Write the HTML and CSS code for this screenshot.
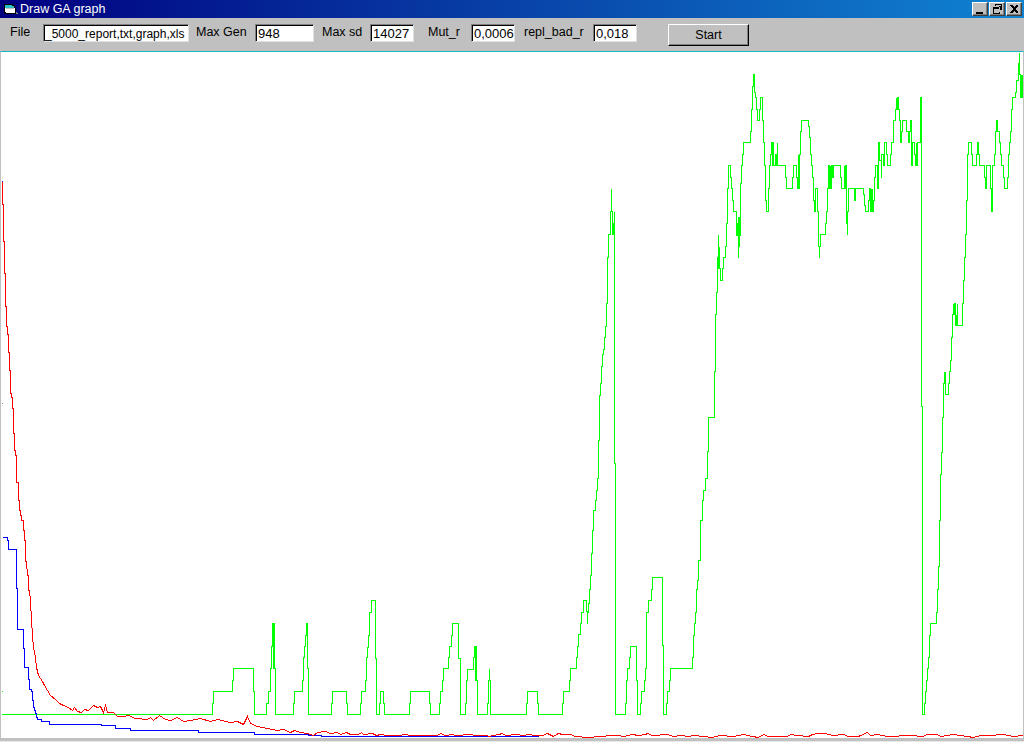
FILE: index.html
```html
<!DOCTYPE html>
<html lang="en">

<head>
    <meta charset="UTF-8">
    <title>Draw GA graph</title>
    <link rel="stylesheet" href="styles.css">
</head>

<body>
    <div class="window">
        <div class="titlebar">
            <svg class="app-icon" width="16" height="16" viewBox="0 0 16 16" shape-rendering="crispEdges">
                <path d="M1 3h9v1h2v3h1v6H2v-1H1z" fill="#000" />
                <path d="M2 4h7v1h2v2H2z" fill="#30c0c8" />
                <path d="M2 7h10v5H3v-1H2z" fill="#fff" />
                <path d="M3 7h8v1H3z" fill="#c0c0c0" />
                <path d="M13 11h1v1h1v1h-2z" fill="#808080" />
            </svg>
            <span class="title-text">Draw GA graph</span>
            <div class="title-buttons">
                <div class="title-btn">
                    <svg width="14" height="12" viewBox="0 0 14 12" shape-rendering="crispEdges"><path d="M3 9h7v2H3z" fill="#000" /></svg>
                </div>
                <div class="title-btn">
                    <svg width="14" height="12" viewBox="0 0 14 12" shape-rendering="crispEdges"><path d="M5 1h7v6h-2V9H9V3H5zM6 2v1h5V2zM3 4h7v7H3zM4 6v4h5V6z" fill="#000" fill-rule="evenodd" /></svg>
                </div>
                <div class="title-btn close-btn">
                    <svg width="14" height="12" viewBox="0 0 14 12" shape-rendering="crispEdges"><path d="M3 2h2l2 2 2-2h2v1L8 6l3 3v1H9L7 8l-2 2H3V9l3-3-3-3z" fill="#000" /></svg>
                </div>
            </div>
        </div>

        <div class="toolbar">
            <label class="lbl lbl-file">File</label>
            <input class="field field-file" type="text" value="_5000_report,txt,graph,xls">
            <label class="lbl lbl-gen">Max Gen</label>
            <input class="field field-gen" type="text" value="948">
            <label class="lbl lbl-sd">Max sd</label>
            <input class="field" type="text" value="14027">
            <label class="lbl lbl-mut">Mut_r</label>
            <input class="field" type="text" value="0,0006">
            <label class="lbl lbl-repl">repl_bad_r</label>
            <input class="field" type="text" value="0,018">
            <button class="start-btn">Start</button>
        </div>

        <div class="graph">
            <svg class="plot" width="1022" height="686" viewBox="1 52 1022 686" shape-rendering="crispEdges" fill="none">
                <g transform="translate(.5 .5)">
                    <path class="tick-green" d="M1 691h1" />
                    <path class="tick-grey" d="M1 403h1" />
                    <!-- green: best fitness -->
                    <path class="line-green" d="M1 714H212V703H213V691H232V680H233V668H253V691H254V714H266V703H268V691H270V668H271V646H272V623H273V668H273V623H274V668H275V714H293V703H294V691H302V680H303V657H304V646H305V635H306V623H307V668H307V623H307V668H308V714H331V703H332V691H346V703H347V714H360V703H361V691H365V680H366V657H367V647H368V635H369V612H371V600H375V658H376V714H379V703H380V691H383V703H384V714H409V703H410V691H429V703H430V714H439V703H440V691H442V680H443V668H448V657H449V646H451V635H452V623H458V658H460V714H465V703H466V680H467V669H473V657H474V646H475V680H475V646H476V680H477V714H487V703H488V680H489V668V680H490V692V714H526V703H527V691H537V703H538V714H562V703H563V691H569V680H570V668H576V657H577V646H578V634H580V623H581V612H583V600H586V611H587V623V612H588V603H589V589H590V575H591V553H592V530H593V510H595V500H596V490H597V478H598V440H599V395H600V383H601V366H602V354H603V349H604V337H605V326H606V303H607V257H608V234H610V211H611V188V211H612V234H613V223H614V211V463H615V714H625V703H626V680H627V668H629V657H630V646H636V680H637V714H640V703H641V691H644V680H645V668H646V612H648V600H651V589H652V577H662V645H663V714H666V703H667V691H669V680H670V668H692V657H693V635H694V623H695V612H696V589H697V580H698V560H700V520H702V500H703V490H705V478H707V451H708V417H714V371H715V314H716V292H717V257H718V234V268H719V246V268H720V280H722V268H723V257H725V246H726V223H727V188H728V165H730V177H731V188H732V200H733V211H736V235V223H737V235H738V257V217H739V246V235H740V183H741V165H742V154H743V142H750V131H751V109H752V86H753V74H754V92H755V97H756V109H757V120H759V109H760V97H762V120H763V142H764V165H765V200H766V211H768V188H769V165H770V154H771V142H772V165H772V142H773V165H775V154H776V165H777V142V165H785V177H786V188H792V177H793V165H796V177H797V188H798V154H798V188H799V154H800V131H801V120H808V126H809V137H810V154H811V165H812V177H813V200H814V211H815V188H817V211H818V246H819V257V246H820V234H825V223H826V211H827V188H828V165H829V188H830V165H830V188H831V165H832V177H833V165H840V177H841V188H844V165V188H845V165H846V223H847V234V211H848V188H854V200H855V188H863V194H864V205H865V211H868V200H869V188H870V211H871V188V211H872V188V211H873V200H874V177H875V165H877V188H878V142H879V160H881V177V154H883V165H884V142H886V154H887V165H890V154H891V142H893V120H895V109H896V97V109H897V97H898V109H899V120H900V142H901V131H902V120H906V131H908V142H909V131H910V120H911V165H912V142H914V154H915V165H916V142V165H917V142H920V97H921V406H922V714H924V703H925V691H926V680H927V668H928V657H929V635H930V623H936V612H937V589H938V566H939V520H940V474H941V452H942V417H943V383H944V371V383H945V371H945V394H948V383H949V371H950V360H951V337H952V314H953V303V314H954V303H955V325H956V314V325H957V303V325H962V303H963V280H964V257H965V234H966V200H967V154H968V142H971V154H972V165H976V154H977V142H978V154H979V165H984V177H985V188H986V165H990V188H991V211H992V165H994V154H995V131H996V120H997V131H999V142H1000V154H1001V165H1003V177H1004V188H1007V177H1008V154H1009V142H1010V131H1011V109H1012V97H1015V92H1016V80H1018V63H1019V52V74H1020V97H1021V74V97H1022V74V86" />
                    <!-- blue: min error -->
                    <path class="line-blue" d="M2 180V181M2 537H7V540H8V549H16V588H17V629H23V648H24V667H28V679H29V689H31V691H32V700H33V707H34V710H35V713H36V717H37V719H41V721H49V724H101V725H115V728H130V730H198V732H254V734H308V735H321V736H538" />
                    <!-- red: average error -->
                    <polyline class="line-red" points="2,181 2,204 3,204 3,241 4,241 4,273 5,273 5,306 6,306 6,326 7,326 7,334 8,334 8,352 9,352 9,370 10,370 10,393 11,393 11,397 12,397 12,408 13,408 13,433 14,433 14,450 15,450 15,455 16,455 16,482 17,482 18,482 18,500 19,500 19,510 20,510 20,515 21,515 21,520 23,520 23,530 24,530 24,540 25,540 25,561 26,561 27,575 28,575 28,590 29,590 30,600 31,620 32,635 33,647 35,657 36,667 38,675 42,681 44,685 47,690 50,695 55,699 59,703 63,705 68,707 72,710 74,707 77,711 81,712 84,709 88,710 93,705 97,707 100,706 103,712 105,705 107,712 113,712 117,716 123,716 128,715 135,718 147,719 150,717 153,720 159,715 165,719 170,720 177,717 183,721 190,720 200,718 210,721 217,719 230,722 237,721 243,724 247,716 250,723 257,726 267,728 277,730 283,729 290,732 294,730 300,732 307,733 313,735 317,732 325,731 330,733 337,732 340,734 343,733 346,732 350,734 358,734 361,732 363,734 372,733 376,735 380,734 387,735 400,735 403,734 412,735 437,735 440,733 445,735 452,734 455,735 470,734 475,735 487,735 488,736 498,734 502,733 505,735 517,734 522,735 530,734 533,735 542,735 547,733 553,736 558,733 562,734 570,734 575,736 587,737 612,735 618,735 623,736 632,734 638,735 645,734 647,733 652,735 667,734 673,736 680,735 688,736 693,735 703,736 712,737 715,736 720,735 733,736 743,734 752,736 758,737 763,734 768,736 787,736 790,734 797,735 808,736 812,734 818,733 825,733 832,735 843,734 848,736 858,736 867,732 870,735 877,734 887,736 910,735 922,736 927,734 937,734 940,736 947,735 953,734 967,736 973,737 980,735 990,735 1002,734 1008,735 1013,736 1023,735" />
                </g>
            </svg>
        </div>
        <div class="bottom-strip"></div>
    </div>
</body>

</html>
```

FILE: styles.css
```css
body {
    margin: 0;
    background-color: #c0c0c0;
    font-family: "Liberation Sans", Arial, sans-serif;
    font-size: 12.5px;
    overflow: hidden;
}

.window {
    width: 1024px;
    height: 742px;
    display: flex;
    flex-direction: column;
}

.titlebar {
    height: 18px;
    flex: none;
    display: flex;
    align-items: center;
    padding: 0 2px 0 3px;
    box-sizing: border-box;
    background: linear-gradient(to right, #000080, #1084d0);
    color: white;
}

.app-icon {
    flex: none;
}

.title-text {
    margin-left: 1px;
    line-height: 18px;
}

.title-buttons {
    margin-left: auto;
    display: flex;
    gap: 1px;
}

.title-btn {
    width: 16px;
    height: 14px;
    box-sizing: border-box;
    background-color: #c0c0c0;
    border: 1px solid;
    border-color: #fff #404040 #404040 #fff;
    box-shadow: inset -1px -1px #808080;
    display: flex;
    align-items: center;
    justify-content: center;
}

.toolbar {
    height: 33px;
    flex: none;
    display: flex;
    align-items: flex-start;
    padding: 6px 0 0 10px;
    box-sizing: border-box;
    background-color: #c0c0c0;
    color: black;
}

.lbl {
    padding-top: 1px;
    line-height: 15px;
    flex: none;
}

.lbl-file {
    width: 33px;
}

.lbl-gen {
    width: 59px;
    margin-left: 7px;
}

.lbl-sd {
    width: 48px;
    margin-left: 8px;
}

.lbl-mut {
    width: 43px;
    margin-left: 14px;
}

.lbl-repl {
    width: 69px;
    margin-left: 9px;
}

.field {
    width: 44px;
    height: 18px;
    flex: none;
    box-sizing: border-box;
    padding: 1px 0 0 2px;
    margin: 0;
    font-family: inherit;
    font-size: 13px;
    color: black;
    background-color: white;
    border: 1px solid;
    border-color: #808080 #e0e0e0 #e0e0e0 #808080;
    box-shadow: inset 1px 1px #000;
    outline: none;
}

.field-file {
    width: 146px;
    font-size: 12px;
    padding-left: 1px;
}

.field-gen {
    width: 59px;
}

.start-btn {
    width: 81px;
    height: 22px;
    margin-left: 31px;
    padding: 0;
    flex: none;
    box-sizing: border-box;
    font-family: inherit;
    font-size: 12.5px;
    color: black;
    background-color: #c0c0c0;
    border: 1px solid;
    border-color: #fff #000 #000 #fff;
    box-shadow: inset -1px -1px #808080;
}

.graph {
    flex: 1;
    min-height: 0;
    background-color: white;
    border-top: 1px solid #18b8c0;
    border-left: 1px solid #c0c0c0;
    border-right: 1px solid #c0c0c0;
    border-bottom: 3px solid #c0c0c0;
}

.plot {
    display: block;
}

.bottom-strip {
    height: 1px;
    flex: none;
    background-color: #e8e8e8;
}

.line-green,
.tick-green {
    stroke: #00ff00;
}

.line-red {
    stroke: #ff0000;
}

.line-blue {
    stroke: #0000ff;
}

.tick-grey {
    stroke: #808080;
}
```
